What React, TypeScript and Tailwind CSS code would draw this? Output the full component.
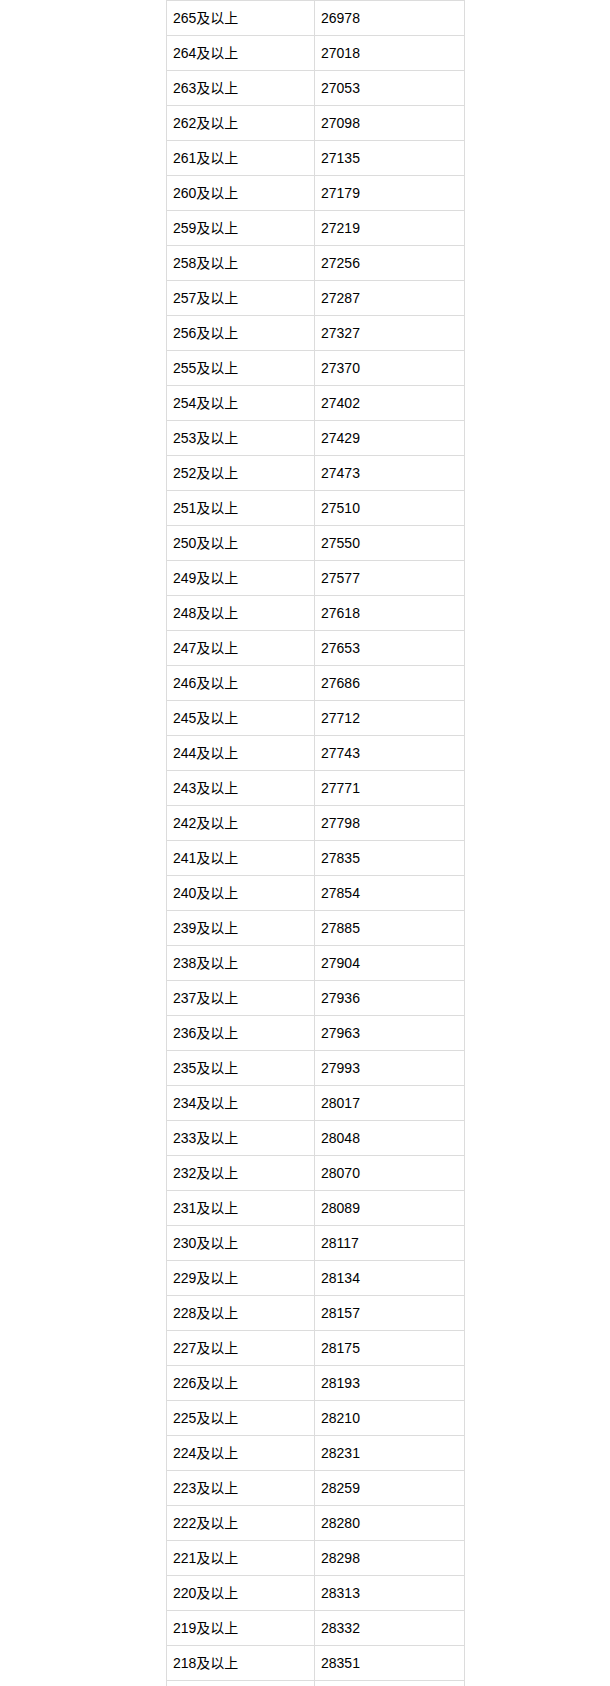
const rows: [string, string][] = [
  ["265", "26978"],
  ["264", "27018"],
  ["263", "27053"],
  ["262", "27098"],
  ["261", "27135"],
  ["260", "27179"],
  ["259", "27219"],
  ["258", "27256"],
  ["257", "27287"],
  ["256", "27327"],
  ["255", "27370"],
  ["254", "27402"],
  ["253", "27429"],
  ["252", "27473"],
  ["251", "27510"],
  ["250", "27550"],
  ["249", "27577"],
  ["248", "27618"],
  ["247", "27653"],
  ["246", "27686"],
  ["245", "27712"],
  ["244", "27743"],
  ["243", "27771"],
  ["242", "27798"],
  ["241", "27835"],
  ["240", "27854"],
  ["239", "27885"],
  ["238", "27904"],
  ["237", "27936"],
  ["236", "27963"],
  ["235", "27993"],
  ["234", "28017"],
  ["233", "28048"],
  ["232", "28070"],
  ["231", "28089"],
  ["230", "28117"],
  ["229", "28134"],
  ["228", "28157"],
  ["227", "28175"],
  ["226", "28193"],
  ["225", "28210"],
  ["224", "28231"],
  ["223", "28259"],
  ["222", "28280"],
  ["221", "28298"],
  ["220", "28313"],
  ["219", "28332"],
  ["218", "28351"],
  ["217", "28372"],
];

const App = () => {
  return (
    <div className="bg-white min-h-screen font-['Liberation_Sans','Noto_Sans_CJK_SC',sans-serif] text-[14px] text-[#000]">
      <div className="ml-[166px] w-[299px] border-t border-l border-r border-[#dcdcdc]">
        {rows.map(([score, rank]) => (
          <div key={score} className="flex h-[35px] border-b border-[#dcdcdc]">
            <div className="w-[148px] border-r border-[#dcdcdc] pl-[6px] pt-[1px] flex items-center">
              {score}及以上
            </div>
            <div className="w-[149px] pl-[6px] pt-[1px] flex items-center">{rank}</div>
          </div>
        ))}
      </div>
    </div>
  );
};

export default App;
